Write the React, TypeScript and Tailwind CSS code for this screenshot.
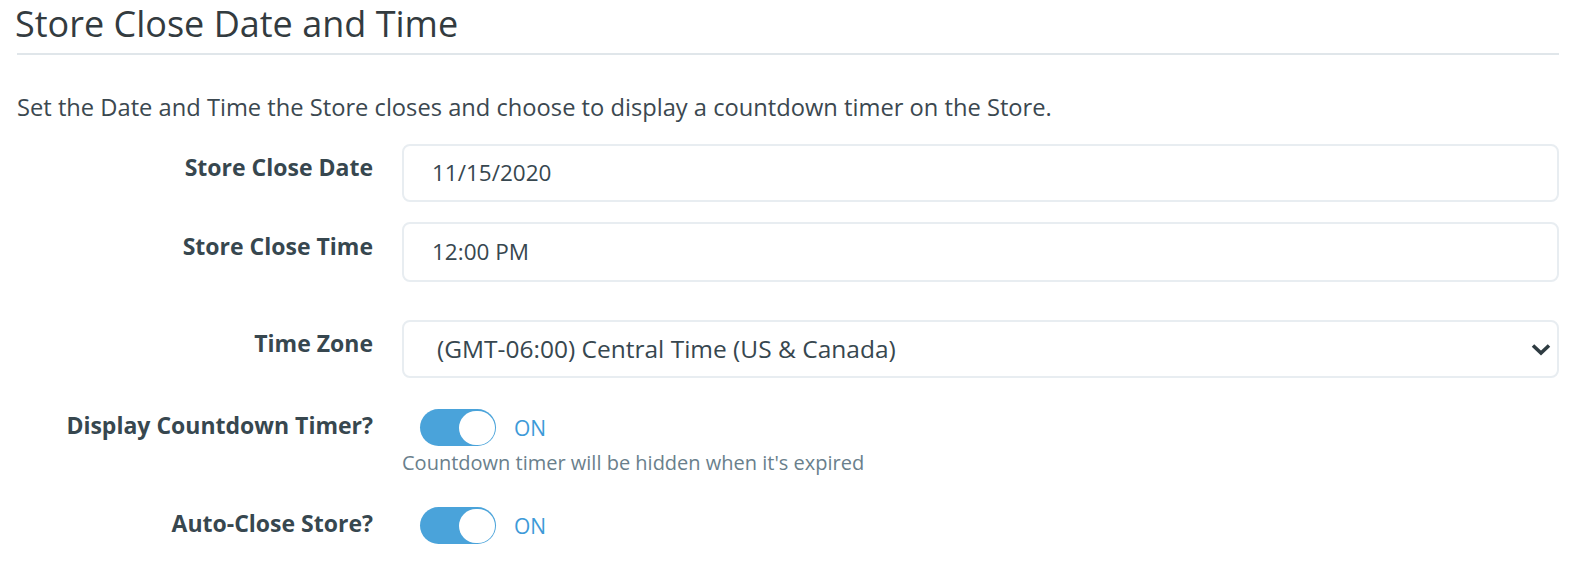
const font = { fontFamily: '"Open Sans", "Liberation Sans", sans-serif' };

function Toggle({ on }: { on: boolean }) {
  return (
    <div className="flex items-center gap-[18px]">
      <div className="flex h-[37px] w-[76px] items-center justify-end rounded-full bg-[#4aa3da] px-[1px]">
        <div className="h-[34px] w-[36px] rounded-full bg-white" />
      </div>
      <span className="text-[21px] leading-[28px] text-[#3d9ad8]">{on ? 'ON' : 'OFF'}</span>
    </div>
  );
}

function Chevron() {
  return (
    <svg width="20" height="13" viewBox="0 0 20 13" fill="none">
      <path d="M2 2.5 L10 10 L18 2.5" stroke="#2f3c42" strokeWidth="3.6" strokeLinejoin="miter" />
    </svg>
  );
}

export default function App() {
  return (
    <div className="min-h-screen bg-white pl-[15px] pr-[29px] text-[#37474f]" style={font}>
      {/* header */}
      <h1 className="pt-[2px] pb-[7px] text-[36px] leading-[44px] text-[#333b3f]">Store Close Date and Time</h1>
      <div className="ml-[2px] h-[2px] bg-[#e0e6ea]" />

      <p className="ml-[2px] mt-[36px] text-[23.7px] leading-[32px] text-[#3b4850]">
        Set the Date and Time the Store closes and choose to display a countdown timer on the Store.
      </p>

      <div className="mt-[21px] flex flex-col">
        <div className="flex items-start">
          <label className="w-[358px] shrink-0 pt-[7px] text-right text-[23px] font-bold leading-[32px]">Store Close Date</label>
          <div className="ml-[29px] flex h-[58px] flex-1 items-center rounded-[8px] border-2 border-[#e8edf1] pl-[28px] text-[22.5px]">
            11/15/2020
          </div>
        </div>

        <div className="mt-[20px] flex items-start">
          <label className="w-[358px] shrink-0 pt-[8px] text-right text-[23px] font-bold leading-[32px]">Store Close Time</label>
          <div className="ml-[29px] flex h-[60px] flex-1 items-center rounded-[8px] border-2 border-[#e8edf1] pl-[28px] text-[22.5px]">
            12:00 PM
          </div>
        </div>

        <div className="mt-[38px] flex items-start">
          <label className="w-[358px] shrink-0 pt-[7px] text-right text-[23px] font-bold leading-[32px]">Time Zone</label>
          <div className="ml-[29px] flex h-[58px] flex-1 items-center justify-between rounded-[8px] border-2 border-[#e8edf1] pl-[33px] pr-[6px] text-[24.5px]">
            <span>(GMT-06:00) Central Time (US &amp; Canada)</span>
            <Chevron />
          </div>
        </div>

        <div className="mt-[31px] flex items-start">
          <label className="w-[358px] shrink-0 text-right text-[23px] font-bold leading-[32px]">Display Countdown Timer?</label>
          <div className="ml-[29px] flex flex-col">
            <div className="pl-[18px]">
              <Toggle on />
            </div>
            <span className="mt-[5px] text-[20px] leading-[24px] text-[#6a7f8c]">Countdown timer will be hidden when it's expired</span>
          </div>
        </div>

        <div className="mt-[32px] flex items-start">
          <label className="w-[358px] shrink-0 text-right text-[23px] font-bold leading-[32px]">Auto-Close Store?</label>
          <div className="ml-[29px] pl-[18px]">
            <Toggle on />
          </div>
        </div>
      </div>
    </div>
  );
}
